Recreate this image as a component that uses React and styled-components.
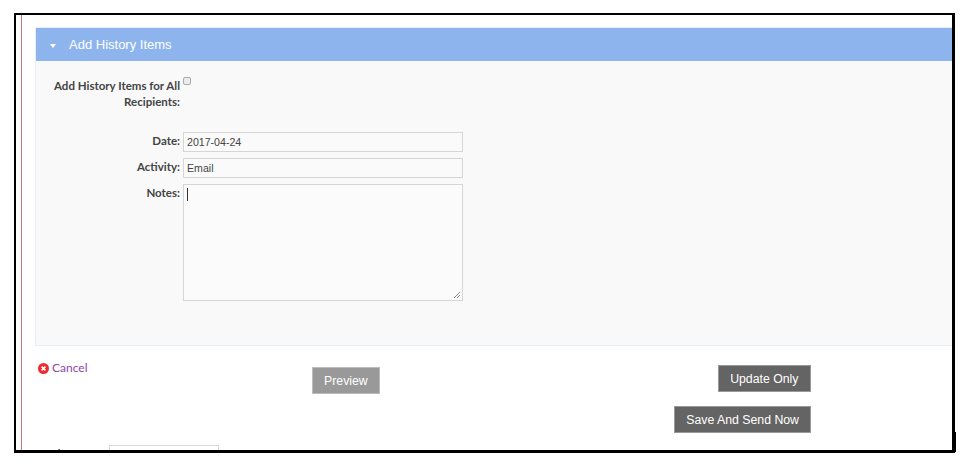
import React from 'react';
import styled, { createGlobalStyle } from 'styled-components';

const Global = createGlobalStyle`
  html, body { margin: 0; padding: 0; background: #fff; width: 971px; height: 464px; overflow: hidden; }
  * { box-sizing: border-box; }
`;

const Screen = styled.div`
  width: 971px;
  height: 464px;
  padding: 13px 0 0 14px;
  display: flex;
  align-items: flex-start;
`;

const Frame = styled.div`
  width: 941px;
  height: 440px;
  border: 3px solid #000;
  border-width: 2px 3px 3px 2px;
  overflow: hidden;
  background: #fff;
  padding-left: 5px;
`;

const Canvas = styled.div`
  height: 100%;
  border-left: 1px solid #c27b7b;
  padding: 12px 0 0 13px;
`;

const Tick = styled.div`
  width: 1px;
  height: 20px;
  background: #000;
  margin: 419px 0 0 0;
`;

const Panel = styled.section`
  height: 319px;
  background: #f9f9f9;
  border: 1px solid #e6eef7;
  border-right: none;
`;

const PanelHeader = styled.header`
  height: 33px;
  background: #8db4ed;
  display: flex;
  align-items: center;
  padding-left: 14px;
  color: #fff;
  font: 13px "Liberation Sans", Arial, sans-serif;
`;

const Caret = styled.span`
  width: 0;
  height: 0;
  border-left: 3px solid transparent;
  border-right: 3px solid transparent;
  border-top: 4px solid #fff;
  margin-right: 13px;
  margin-top: 2px;
`;

const FormGrid = styled.div`
  display: grid;
  grid-template-columns: 144px 280px;
  column-gap: 3px;
  padding-top: 16px;
`;

const Label = styled.label`
  font: 700 11.5px/16px Lato, sans-serif;
  color: #444;
  text-align: right;
  margin-top: 1px;
  margin-bottom: ${p => p.$bottom || 0}px;
`;

const Check = styled.span`
  display: block;
  width: 8px;
  height: 8px;
  border: 1px solid #a9a9a9;
  border-radius: 2px;
  background: #ececec;
`;

const Field = styled.div`
  height: 20px;
  border: 1px solid #d6d6d6;
  background: #fafafa;
  padding: 0 0 0 3px;
  font: 10.6px/18px "Liberation Sans", Arial, sans-serif;
  color: #444;
  margin-bottom: 6px;
`;

const TextArea = styled.div`
  position: relative;
  height: 117px;
  border: 1px solid #d6d6d6;
  background: #fbfbfb;
`;

const Cursor = styled.span`
  display: block;
  width: 1px;
  height: 13px;
  background: #333;
  margin: 3px 0 0 3px;
`;

const Grip = styled.svg`
  position: absolute;
  right: 1px;
  bottom: 1px;
`;

const Actions = styled.div`
  display: grid;
  grid-template-columns: 277px 1fr 141px;
  height: 99px;
  padding-right: 141px;
`;

const CancelLink = styled.a`
  display: flex;
  align-items: center;
  gap: 3px;
  height: 16px;
  margin: 14px 0 0 3px;
  color: #8e44ad;
  font: 12px/16px Lato, sans-serif;
`;

const MidCol = styled.div`
  padding-top: 21px;
`;

const RightCol = styled.div`
  display: flex;
  flex-direction: column;
  align-items: flex-end;
  gap: 14px;
  padding-top: 19px;
  grid-column: 3;
  width: 360px;
  justify-self: end;
`;

const Button = styled.button`
  height: 27px;
  padding: 0 ${p => p.$pad || 11.5}px;
  border: 1px solid;
  border-color: ${p => (p.$light ? '#bbb' : '#999')};
  background: ${p => (p.$light ? '#999' : '#646464')};
  color: #fff;
  font: 12.3px "Liberation Sans", Arial, sans-serif;
`;

const BottomRow = styled.div`
  display: flex;
  align-items: flex-start;
  gap: 14px;
`;

const CutLabel = styled.span`
  font: 700 11.5px/14px Lato, sans-serif;
  color: #444;
  width: 60px;
  margin-top: 2px;
  white-space: nowrap;
`;

const CutBox = styled.div`
  width: 110px;
  height: 30px;
  border: 1px solid #d9d9d9;
  padding: 2px 0 0 3px;
`;

export default function App() {
  return (
    <>
      <Global />
      <Screen>
        <Frame>
          <Canvas>
            <Panel>
              <PanelHeader><Caret />Add History Items</PanelHeader>
              <FormGrid>
                <Label $bottom={22}>Add History Items for All Recipients:</Label>
                <div><Check /></div>
                <Label>Date:</Label>
                <Field>2017-04-24</Field>
                <Label>Activity:</Label>
                <Field>Email</Field>
                <Label>Notes:</Label>
                <TextArea>
                  <Cursor />
                  <Grip width="8" height="8" viewBox="0 0 8 8">
                    <path d="M1 7 L7 1 M4 7 L7 4" stroke="#888" strokeWidth="1" fill="none" />
                  </Grip>
                </TextArea>
              </FormGrid>
            </Panel>
            <Actions>
              <CancelLink>
                <svg width="11" height="11" viewBox="0 0 11 11">
                  <circle cx="5.5" cy="5.5" r="5.5" fill="#ee2a2f" />
                  <path d="M3.6 3.6 L7.4 7.4 M7.4 3.6 L3.6 7.4" stroke="#fff" strokeWidth="1.6" />
                </svg>
                Cancel
              </CancelLink>
              <MidCol><Button $light $pad={11}>Preview</Button></MidCol>
              <RightCol>
                <Button>Update Only</Button>
                <Button $pad={11}>Save And Send Now</Button>
              </RightCol>
            </Actions>
            <BottomRow>
              <CutLabel>Send On Date:</CutLabel>
              <CutBox>
                <svg width="10" height="10" viewBox="0 0 10 10">
                  <rect x="0.5" y="1" width="9" height="8" fill="none" stroke="#d9534f" />
                </svg>
              </CutBox>
            </BottomRow>
          </Canvas>
        </Frame>
        <Tick />
      </Screen>
    </>
  );
}
